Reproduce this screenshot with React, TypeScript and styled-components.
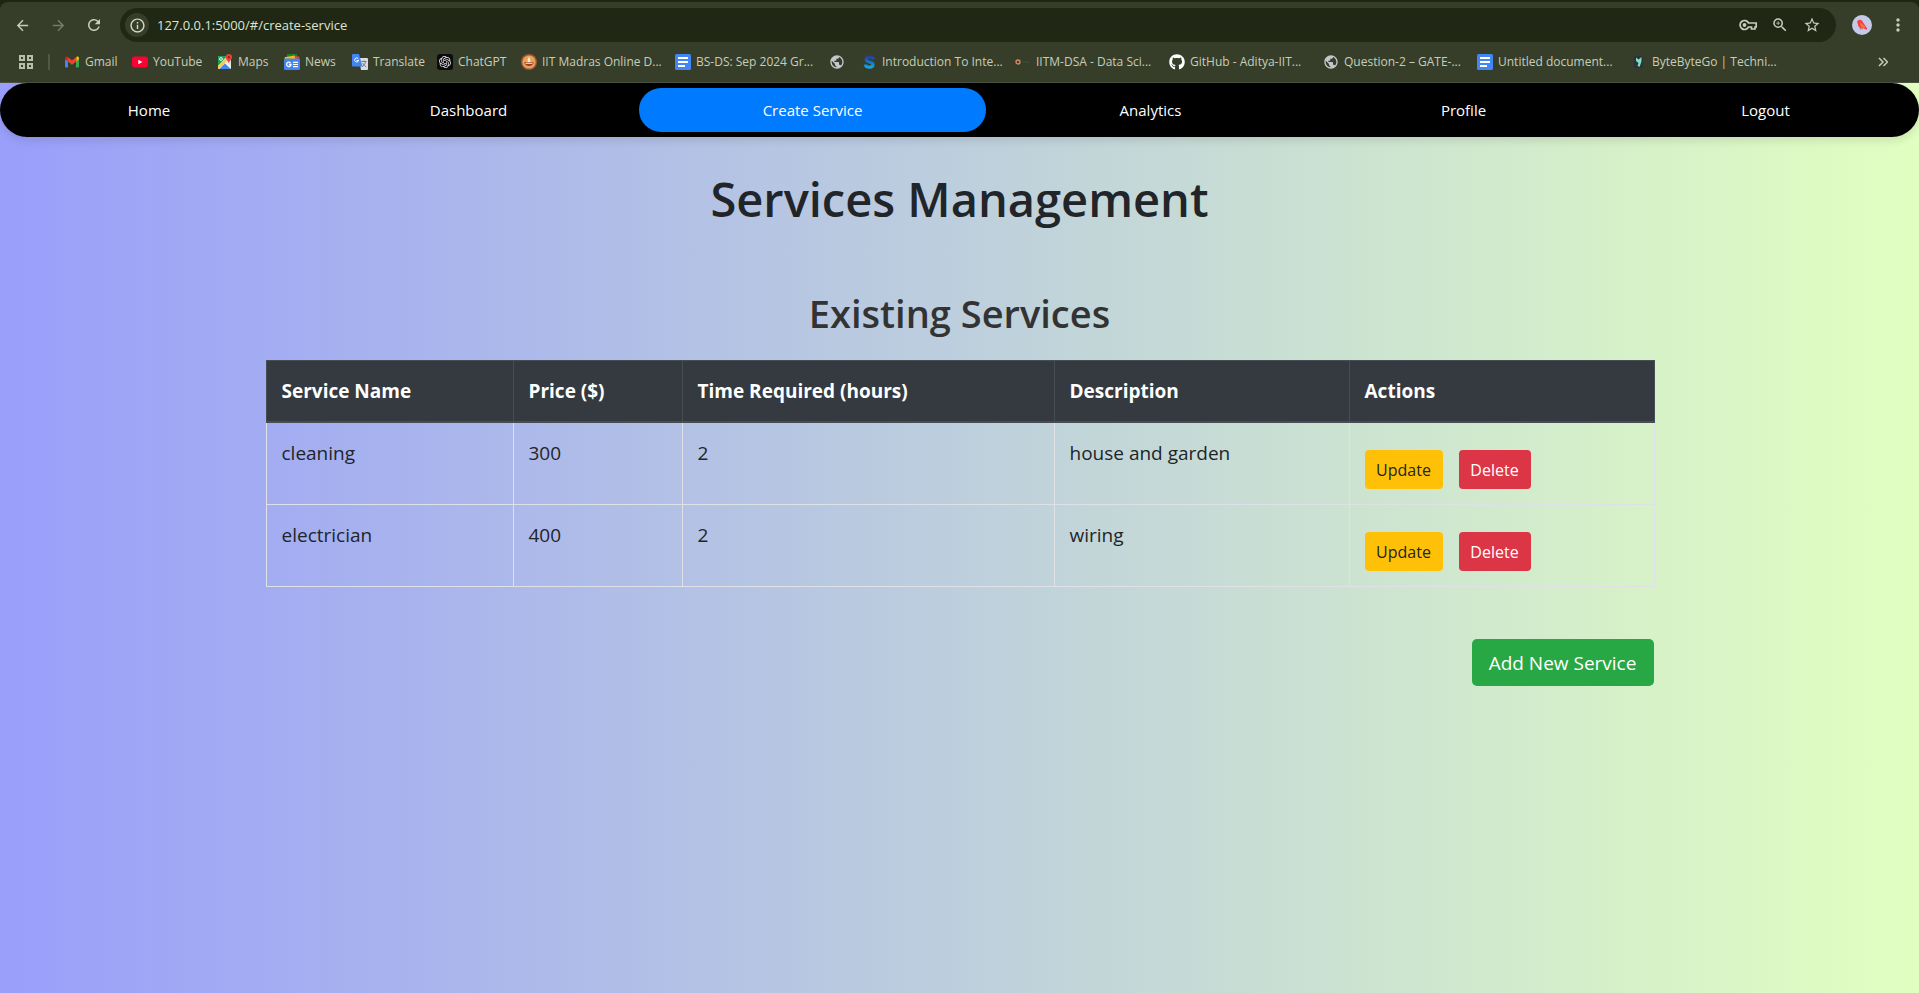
import React from 'react';
import styled, { createGlobalStyle, css } from 'styled-components';
import { SiOpenai } from 'react-icons/si';
import { FaGithub } from 'react-icons/fa';
import {
  MdArrowBack,
  MdArrowForward,
  MdRefresh,
  MdInfoOutline,
  MdOutlineZoomIn,
  MdStarOutline,
  MdMoreVert,
  MdPublic,
} from 'react-icons/md';

const GlobalStyle = createGlobalStyle`
  *, *::before, *::after { box-sizing: border-box; }
  body {
    margin: 0;
    font-family: "Open Sans", "Noto Sans", sans-serif;
    color: #212529;
  }
  button, input { font-family: inherit; }
`;

const Window = styled.div`
  display: flex;
  flex-direction: column;
  min-height: 100vh;
`;

/* ---------- Browser frame ---------- */

const BrowserFrame = styled.header`
  background: #1e2512;
  padding-top: 2px;
`;

const FrameBody = styled.div`
  background: #363e29;
  border-radius: 8px 8px 0 0;
  border-bottom: 1px solid #4b5143;
`;

const Toolbar = styled.div`
  display: flex;
  align-items: center;
  height: 46px;
  padding: 0 11px 0 12px;
`;

const ToolButton = styled.button<{ $faded?: boolean; $gap?: number }>`
  display: flex;
  align-items: center;
  justify-content: center;
  width: 20px;
  height: 28px;
  margin: 0 ${(p) => p.$gap ?? 0}px 0 0;
  padding: 0;
  border: 0;
  background: none;
  color: ${(p) => (p.$faded ? '#767c69' : '#c8cdbb')};
  flex: none;
`;

const AddressBar = styled.form`
  display: flex;
  align-items: center;
  flex: 1;
  height: 34px;
  margin-right: 16px;
  padding: 0 14px 0 5px;
  border-radius: 17px;
  background: #202715;
`;

const SiteInfo = styled.button`
  display: flex;
  align-items: center;
  justify-content: center;
  width: 24px;
  height: 24px;
  padding: 0;
  border: 0;
  border-radius: 50%;
  background: #363e29;
  color: #d5dac9;
`;

const AddressInput = styled.input`
  flex: 1;
  min-width: 0;
  margin-left: 8px;
  padding: 0;
  border: 0;
  outline: 0;
  background: none;
  color: #dfe4d2;
  font-size: 13px;
  line-height: 20px;
`;

const BookmarkBar = styled.nav`
  display: flex;
  align-items: center;
  height: 34px;
  padding: 0 26px 6px 16px;
  color: #c8cdbb;
`;

const AppsButton = styled(ToolButton)`
  color: #b9beac;
`;

const Divider = styled.span`
  width: 2px;
  height: 16px;
  margin: 0 14px 0 12px;
  background: #505941;
`;

const Bookmark = styled.a<{ $width: number }>`
  display: flex;
  align-items: center;
  flex: none;
  gap: 5px;
  width: ${(p) => p.$width}px;
  color: inherit;
  font-size: 12px;
  line-height: 16px;
  text-decoration: none;
  white-space: nowrap;

  svg { flex: none; }
`;

const Spacer = styled.span`
  flex: 1;
`;

/* ---------- Page ---------- */

const Page = styled.div`
  flex: 1;
  background: linear-gradient(to right, #999ffa, #e1ffc0);
`;

const NavBar = styled.nav`
  display: grid;
  grid-template-columns: 298fr 341fr 347fr 329fr 297fr 307fr;
  height: 54px;
  padding: 5px 0;
  border-radius: 27px;
  background: #000;
  box-shadow: 0 4px 8px rgba(0, 0, 0, 0.1);
`;

const NavLink = styled.a<{ $active?: boolean }>`
  display: flex;
  align-items: center;
  justify-content: center;
  border-radius: 22px;
  color: #fff;
  font-size: 15px;
  line-height: 24px;
  text-decoration: none;
  ${(p) => p.$active && css`background: #007bff;`}
`;

const Content = styled.main`
  max-width: 1388px;
  margin: 0 auto;
  padding-top: 32px;
`;

const Title = styled.h1`
  margin: 0 0 60px;
  font-size: 47px;
  font-weight: 600;
  line-height: 60px;
  text-align: center;
`;

const SectionTitle = styled.h2`
  margin: 0 0 23px;
  color: #333;
  font-size: 38px;
  font-weight: 600;
  line-height: 48px;
  text-align: center;
`;

const Table = styled.table`
  width: 100%;
  table-layout: fixed;
  border-collapse: collapse;
  font-size: 19px;
  line-height: 30px;
  text-align: left;
`;

const Column = styled.col<{ $width: number }>`
  width: ${(p) => p.$width}px;
`;

const HeadCell = styled.th`
  padding: 15px;
  border: 1px solid #454d55;
  border-bottom-width: 2px;
  background: #343a40;
  color: #fff;
  font-weight: 700;
`;

const Cell = styled.td`
  padding: 15px;
  border: 1px solid #dee2e6;
  vertical-align: top;
`;

const Actions = styled.div`
  display: flex;
  gap: 16px;
  padding-top: 12px;
`;

const ActionButton = styled.button<{ $danger?: boolean }>`
  width: ${(p) => (p.$danger ? 72 : 78)}px;
  height: 39px;
  padding: 0;
  border: 0;
  border-radius: 4px;
  background: ${(p) => (p.$danger ? '#dc3545' : '#ffc107')};
  color: ${(p) => (p.$danger ? '#fff' : '#212529')};
  font-size: 16px;
  line-height: 26px;
`;

const Footer = styled.div`
  display: flex;
  justify-content: flex-end;
  padding: 52px 0;
`;

const AddButton = styled.button`
  width: 182px;
  height: 47px;
  padding: 0;
  border: 0;
  border-radius: 5px;
  background: #28a745;
  color: #fff;
  font-size: 19px;
  line-height: 30px;
`;

/* ---------- Icons ---------- */

const GmailIcon = () => (
  <svg width="16" height="16" viewBox="0 0 16 16">
    <path d="M1 4.4v8.2c0 .5.4.9.9.9H4V7z" fill="#4285f4" />
    <path d="M15 4.4v8.2c0 .5-.4.9-.9.9H12V7z" fill="#34a853" />
    <path d="M12 4v3.6l3-2.4V4c0-1.400-1.500-2-2.500-1.200z" fill="#fbbc04" />
    <path d="M4 4v3.600L1 5.200V4c0-1.400 1.500-2 2.500-1.200z" fill="#c5221f" />
    <path d="M3.500 2.900 8 6.300l4.500-3.400V7.300L8 10.700 3.500 7.300z" fill="#ea4335" />
  </svg>
);

const YouTubeIcon = () => (
  <svg width="16" height="16" viewBox="0 0 16 16">
    <rect y="2.500" width="16" height="11" rx="3" fill="#ff0033" />
    <path d="M6.300 5.700v4.600L10.400 8z" fill="#fff" />
  </svg>
);

const MapsIcon = () => (
  <svg width="16" height="16" viewBox="0 0 16 16">
    <rect x="1" y="2" width="13" height="13" rx="1" fill="#dfe3e0" />
    <path d="M1 3a1 1 0 0 1 1-1h8L1 12z" fill="#1e9e58" />
    <path d="m1 12 7-7 2 2-8 8H2a1 1 0 0 1-1-1z" fill="#f7cb4d" />
    <path d="M2.500 15 8 9.500l5.500 5.500z" fill="#4285f4" />
    <path d="M8 9 9.500 7.500 14 12v2z" fill="#eef1f4" />
    <circle cx="4" cy="5" r="1.400" fill="none" stroke="#fff" strokeWidth=".9" />
    <path d="M11.800 0a3.200 3.200 0 0 0-3.200 3.200c0 2.400 2.600 3.200 3.200 6.300.6-3.100 3.200-3.900 3.200-6.300A3.200 3.200 0 0 0 11.800 0z" fill="#e94335" />
    <circle cx="11.800" cy="3.200" r="1.100" fill="#8c1f16" />
  </svg>
);

const NewsIcon = () => (
  <svg width="16" height="16" viewBox="0 0 16 16">
    <path d="M3 0h10v5H3z" fill="#188038" />
    <path d="m9 1.500 6.500 1.300-.8 3.200L8 5z" fill="#ea4335" />
    <path d="m.5 3.200 10-1.700 1 4.500H1z" fill="#fbbc04" />
    <rect y="4.500" width="16" height="11.500" rx="1" fill="#4285f4" />
    <path d="M6.500 9A2.200 2.200 0 1 0 7 10.500H4.900" fill="none" stroke="#fff" strokeWidth="1.300" />
    <path d="M9 8.300h5M9 10.500h5M9 12.700h5" stroke="#fff" strokeWidth="1.200" />
  </svg>
);

const TranslateIcon = () => (
  <svg width="16" height="16" viewBox="0 0 16 16">
    <path d="M7 4h8a1 1 0 0 1 1 1v10a1 1 0 0 1-1 1H9z" fill="#dadce0" />
    <path d="M9.500 7.500h5M12 6.500v1M13.500 8c-.5 2-2 3.800-3.500 4.800M10.700 9c.8 1.800 2 3 3.500 4" fill="none" stroke="#6b7480" strokeWidth=".9" />
    <path d="M1 0h6l3.500 12.500H1a1 1 0 0 1-1-1V1a1 1 0 0 1 1-1z" fill="#4285f4" />
    <path d="M6.300 4.800A2 2 0 1 0 6.600 6.400H4.600" fill="none" stroke="#fff" strokeWidth="1" />
  </svg>
);

const ChatTile = styled.span`
  display: flex;
  align-items: center;
  justify-content: center;
  width: 16px;
  height: 16px;
  border-radius: 3px;
  background: #0c0c0c;
  color: #e8e8e8;
`;

const ChatGptIcon = () => (
  <ChatTile>
    <SiOpenai size={12} />
  </ChatTile>
);

const MadrasIcon = () => (
  <svg width="16" height="16" viewBox="0 0 16 16">
    <circle cx="8" cy="8" r="8" fill="#a5543f" />
    <circle cx="8" cy="8" r="6.600" fill="#e3a552" />
    <path d="M8 2.500 9.300 5.500v3H6.700v-3z" fill="#f6ead6" />
    <path d="M3.200 8.300h9.600c-.4 2.300-2.300 3.700-4.800 3.700s-4.400-1.400-4.800-3.700z" fill="#9a3a34" />
    <path d="M4.500 9.300h7" stroke="#f6ead6" />
  </svg>
);

const DocsIcon = () => (
  <svg width="16" height="16" viewBox="0 0 16 16">
    <rect width="16" height="16" rx="1.500" fill="#4285f4" />
    <path d="M3 4h10M3 8h10M3 12h7" stroke="#fff" strokeWidth="2" />
  </svg>
);

const GlobeIcon = () => <MdPublic size={16} color="#c3c6cb" />;

const SIcon = () => (
  <svg width="16" height="16" viewBox="0 0 16 16">
    <defs>
      <linearGradient id="s-fill" x1="0" y1="0" x2="0" y2="1">
        <stop offset="0" stopColor="#2b3f9e" />
        <stop offset=".5" stopColor="#0e78cf" />
        <stop offset="1" stopColor="#12a5e0" />
      </linearGradient>
    </defs>
    <path
      d="M12.500 5.200C12 3.500 10.700 3 8.700 3 6.500 3 5.200 3.800 5.200 5.300c0 3.700 6.800 1.600 6.800 5.300 0 1.700-1.500 2.600-3.700 2.600-2.400 0-3.700-.9-4.100-2.700"
      fill="none"
      stroke="url(#s-fill)"
      strokeWidth="3.200"
    />
  </svg>
);

const DotIcon = () => (
  <svg width="16" height="16" viewBox="0 0 16 16">
    <circle cx="3" cy="8" r="2" fill="#5d3324" stroke="#d98c63" strokeWidth="1.300" />
    <path d="M7 8h8" stroke="#444a3b" />
  </svg>
);

const ByteIcon = () => (
  <svg width="16" height="16" viewBox="0 0 16 16">
    <rect x="3" y="2" width="9" height="12" rx="2" fill="#2b3238" />
    <path d="M5 3.500 7.500 5.500 10.500 3v4.500L8.500 13 6.500 11.500 7.500 9 5 7z" fill="#7fe0c0" />
  </svg>
);

const AppsIcon = () => (
  <svg width="14" height="14" viewBox="0 0 14 14" fill="none" stroke="currentColor" strokeWidth="2">
    <path d="M1 1h4v4H1zM9 1h4v4H9zM1 9h4v4H1zM9 9h4v4H9z" />
  </svg>
);

const KeyIcon = () => (
  <svg width="18" height="12" viewBox="0 0 18 12" fill="none" stroke="currentColor">
    <path d="M9.600 4A4.500 4.500 0 1 0 9.600 8H12.500v2h3.500V8h1.200V4z" strokeWidth="1.700" />
    <circle cx="5.500" cy="6" r="1.900" fill="currentColor" stroke="none" />
  </svg>
);

const ChevronsIcon = () => (
  <svg width="10" height="10" viewBox="0 0 10 10" fill="none" stroke="currentColor" strokeWidth="1.500">
    <path d="m1 1 4 4-4 4M5.500 1l4 4-4 4" />
  </svg>
);

const AvatarIcon = () => (
  <svg width="20" height="20" viewBox="0 0 20 20">
    <circle cx="10" cy="10" r="10" fill="#c5cae9" />
    <path d="M5 6.800 6.500 5c1.800-.7 3.300 0 4 1.600l4.800 7.200-.9 1-3.200-1.600c-3 .5-5.200-.9-5.200-3.700z" fill="#f4433c" />
    <path d="m8.500 7.500 5.500 5-3.500.3C8.700 11.500 8 9.500 8.500 7.500z" fill="#ff7043" />
    <path d="m8.500 12.800-.5 1.700M10.300 13.200l-.3 1.500" stroke="#b3392f" strokeWidth=".7" />
  </svg>
);

/* ---------- Data ---------- */

const bookmarks: { label: string; title?: string; width: number; Icon: React.FC }[] = [
  { label: 'Gmail', width: 68, Icon: GmailIcon },
  { label: 'YouTube', width: 85, Icon: YouTubeIcon },
  { label: 'Maps', width: 67, Icon: MapsIcon },
  { label: 'News', width: 68, Icon: NewsIcon },
  { label: 'Translate', width: 85, Icon: TranslateIcon },
  { label: 'ChatGPT', width: 84, Icon: ChatGptIcon },
  { label: 'IIT Madras Online D...', width: 154, Icon: MadrasIcon },
  { label: 'BS-DS: Sep 2024 Gr...', width: 154, Icon: DocsIcon },
  { label: '', title: 'Website', width: 32, Icon: GlobeIcon },
  { label: 'Introduction To Inte...', width: 154, Icon: SIcon },
  { label: 'IITM-DSA - Data Sci...', width: 154, Icon: DotIcon },
  { label: 'GitHub - Aditya-IIT...', width: 154, Icon: () => <FaGithub size={16} color="#fff" /> },
  { label: 'Question-2 – GATE-...', width: 154, Icon: GlobeIcon },
  { label: 'Untitled document...', width: 154, Icon: DocsIcon },
  { label: 'ByteByteGo | Techni...', width: 154, Icon: ByteIcon },
];

const navItems = ['Home', 'Dashboard', 'Create Service', 'Analytics', 'Profile', 'Logout'];

const columns = [
  { label: 'Service Name', width: 247 },
  { label: 'Price ($)', width: 169 },
  { label: 'Time Required (hours)', width: 372 },
  { label: 'Description', width: 295 },
  { label: 'Actions', width: 305 },
];

const services = [
  { name: 'cleaning', price: 300, hours: 2, description: 'house and garden' },
  { name: 'electrician', price: 400, hours: 2, description: 'wiring' },
];

export default function App() {
  return (
    <Window>
      <GlobalStyle />
      <BrowserFrame>
        <FrameBody>
          <Toolbar>
            <ToolButton aria-label="Back" $gap={16}><MdArrowBack size={17} /></ToolButton>
            <ToolButton aria-label="Forward" $faded $gap={16}><MdArrowForward size={17} /></ToolButton>
            <ToolButton aria-label="Reload" $gap={16}><MdRefresh size={18} /></ToolButton>
            <AddressBar onSubmit={(e) => e.preventDefault()}>
              <SiteInfo type="button" aria-label="Site information"><MdInfoOutline size={17} /></SiteInfo>
              <AddressInput aria-label="Address" defaultValue="127.0.0.1:5000/#/create-service" />
              <ToolButton type="button" aria-label="Passwords" $gap={12}><KeyIcon /></ToolButton>
              <ToolButton type="button" aria-label="Zoom" $gap={12}><MdOutlineZoomIn size={18} /></ToolButton>
              <ToolButton type="button" aria-label="Bookmark this page"><MdStarOutline size={18} /></ToolButton>
            </AddressBar>
            <ToolButton aria-label="Profile" $gap={16}><AvatarIcon /></ToolButton>
            <ToolButton aria-label="Menu"><MdMoreVert size={20} /></ToolButton>
          </Toolbar>
          <BookmarkBar aria-label="Bookmarks">
            <AppsButton aria-label="Apps"><AppsIcon /></AppsButton>
            <Divider />
            {bookmarks.map(({ label, title, width, Icon }, i) => (
              <Bookmark key={i} href="#" aria-label={title} $width={width}>
                <Icon />
                {label}
              </Bookmark>
            ))}
            <Spacer />
            <ToolButton aria-label="More bookmarks"><ChevronsIcon /></ToolButton>
          </BookmarkBar>
        </FrameBody>
      </BrowserFrame>
      <Page>
        <NavBar>
          {navItems.map((item) => (
            <NavLink key={item} href="#" $active={item === 'Create Service'}>{item}</NavLink>
          ))}
        </NavBar>
        <Content>
          <Title>Services Management</Title>
          <SectionTitle>Existing Services</SectionTitle>
          <Table>
            <colgroup>
              {columns.map((c) => <Column key={c.label} $width={c.width} />)}
            </colgroup>
            <thead>
              <tr>
                {columns.map((c) => <HeadCell key={c.label} scope="col">{c.label}</HeadCell>)}
              </tr>
            </thead>
            <tbody>
              {services.map((s) => (
                <tr key={s.name}>
                  <Cell>{s.name}</Cell>
                  <Cell>{s.price}</Cell>
                  <Cell>{s.hours}</Cell>
                  <Cell>{s.description}</Cell>
                  <Cell>
                    <Actions>
                      <ActionButton>Update</ActionButton>
                      <ActionButton $danger>Delete</ActionButton>
                    </Actions>
                  </Cell>
                </tr>
              ))}
            </tbody>
          </Table>
          <Footer>
            <AddButton>Add New Service</AddButton>
          </Footer>
        </Content>
      </Page>
    </Window>
  );
}
